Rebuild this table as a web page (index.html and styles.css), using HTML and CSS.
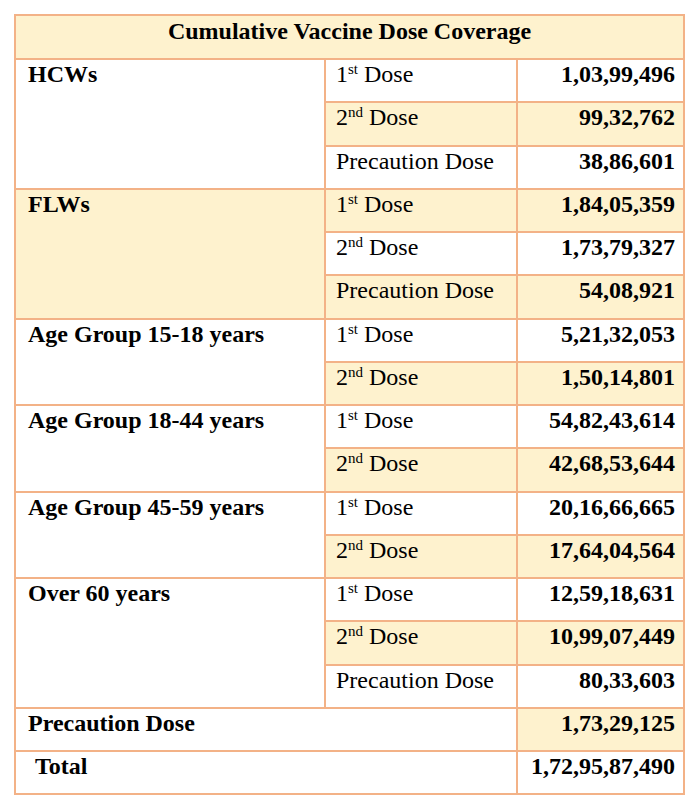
FILE: index.html
```html
<!DOCTYPE html>
<html lang="en">
<head>
<meta charset="utf-8">
<title>Cumulative Vaccine Dose Coverage</title>
<link rel="stylesheet" href="styles.css">
</head>
<body>
<table class="cov">
  <colgroup>
    <col class="c1"><col class="c2"><col class="c3">
  </colgroup>
  <thead>
    <tr class="head"><th colspan="3" class="fill">Cumulative Vaccine Dose Coverage</th></tr>
  </thead>
  <tbody>
    <tr>
      <td rowspan="3" class="grp">HCWs</td>
      <td class="dose">1<sup>st</sup> Dose</td>
      <td class="num">1,03,99,496</td>
    </tr>
    <tr>
      <td class="dose fill">2<sup>nd</sup> Dose</td>
      <td class="num fill">99,32,762</td>
    </tr>
    <tr>
      <td class="dose">Precaution Dose</td>
      <td class="num">38,86,601</td>
    </tr>

    <tr>
      <td rowspan="3" class="grp fill">FLWs</td>
      <td class="dose fill">1<sup>st</sup> Dose</td>
      <td class="num fill">1,84,05,359</td>
    </tr>
    <tr>
      <td class="dose">2<sup>nd</sup> Dose</td>
      <td class="num">1,73,79,327</td>
    </tr>
    <tr>
      <td class="dose fill">Precaution Dose</td>
      <td class="num fill">54,08,921</td>
    </tr>

    <tr>
      <td rowspan="2" class="grp">Age Group 15-18 years</td>
      <td class="dose">1<sup>st</sup> Dose</td>
      <td class="num">5,21,32,053</td>
    </tr>
    <tr>
      <td class="dose fill">2<sup>nd</sup> Dose</td>
      <td class="num fill">1,50,14,801</td>
    </tr>

    <tr>
      <td rowspan="2" class="grp">Age Group 18-44 years</td>
      <td class="dose">1<sup>st</sup> Dose</td>
      <td class="num">54,82,43,614</td>
    </tr>
    <tr>
      <td class="dose fill">2<sup>nd</sup> Dose</td>
      <td class="num fill">42,68,53,644</td>
    </tr>

    <tr>
      <td rowspan="2" class="grp">Age Group 45-59 years</td>
      <td class="dose">1<sup>st</sup> Dose</td>
      <td class="num">20,16,66,665</td>
    </tr>
    <tr>
      <td class="dose fill">2<sup>nd</sup> Dose</td>
      <td class="num fill">17,64,04,564</td>
    </tr>

    <tr>
      <td rowspan="3" class="grp">Over 60 years</td>
      <td class="dose">1<sup>st</sup> Dose</td>
      <td class="num">12,59,18,631</td>
    </tr>
    <tr>
      <td class="dose fill">2<sup>nd</sup> Dose</td>
      <td class="num fill">10,99,07,449</td>
    </tr>
    <tr>
      <td class="dose">Precaution Dose</td>
      <td class="num">80,33,603</td>
    </tr>

    <tr>
      <td colspan="2" class="grp">Precaution Dose</td>
      <td class="num fill">1,73,29,125</td>
    </tr>
    <tr>
      <td colspan="2" class="grp total">Total</td>
      <td class="num">1,72,95,87,490</td>
    </tr>
  </tbody>
</table>
</body>
</html>
```

FILE: styles.css
```css
html, body {
  margin: 0;
  padding: 0;
  background: #ffffff;
}

body {
  padding: 14px 0 0 14px;
  font-family: "Liberation Serif", "Times New Roman", serif;
  color: #000000;
}

.cov {
  border-collapse: separate;
  border-spacing: 0;
  border-top: 2px solid #f3b287;
  border-left: 2px solid #f3b287;
  table-layout: fixed;
  width: 671px;
  font-size: 24px;
  line-height: 27px;
}

.c1 { width: 310px; }
.c2 { width: 192px; }
.c3 { width: 167px; }

.cov th,
.cov td {
  box-sizing: border-box;
  border-right: 2px solid #f3b287;
  border-bottom: 2px solid #f3b287;
  vertical-align: top;
  padding: 1px 0 0 0;
  background: #ffffff;
}

.cov tbody tr {
  height: 43.25px;
}

.cov .head {
  height: 44px;
}

.cov th {
  font-weight: bold;
  text-align: center;
  padding-top: 2px;
}

.cov .fill {
  background: #fef2ce;
}

.cov .grp {
  font-weight: bold;
  padding-left: 12px;
}

.cov .grp.total {
  padding-left: 19px;
}

.cov .dose {
  font-weight: normal;
  padding-left: 10px;
}

.dose sup {
  font-size: 15px;
  line-height: 0;
  vertical-align: 8px;
}

.cov .num {
  font-weight: bold;
  text-align: right;
  padding-right: 8px;
}
```
